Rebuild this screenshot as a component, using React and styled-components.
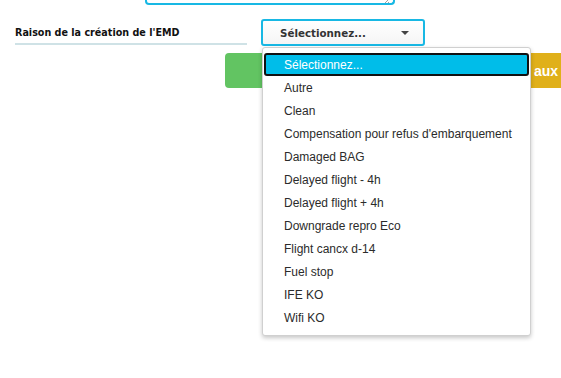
import React from "react";
import styled, { createGlobalStyle } from "styled-components";

const options = [
  "Autre",
  "Clean",
  "Compensation pour refus d'embarquement",
  "Damaged BAG",
  "Delayed flight - 4h",
  "Delayed flight + 4h",
  "Downgrade repro Eco",
  "Flight cancx d-14",
  "Fuel stop",
  "IFE KO",
  "Wifi KO",
];

const GlobalStyle = createGlobalStyle`
  html, body {
    margin: 0;
    padding: 0;
    background: #ffffff;
    overflow: hidden;
  }
  body {
    font-family: "Liberation Sans", Arial, sans-serif;
  }
`;

const Page = styled.div`
  width: 561px;
  height: 378px;
  position: relative;
  overflow: hidden;
`;

const TextareaEnd = styled.div`
  position: relative;
  margin-left: 145px;
  width: 250px;
  height: 5px;
  box-sizing: border-box;
  border: 2px solid #18b8e4;
  border-top: none;
  border-radius: 0 0 4px 4px;
`;

const Grip = styled.svg`
  position: absolute;
  right: 4px;
  bottom: 0;
`;

const FieldRow = styled.div`
  display: flex;
  align-items: flex-start;
  margin-top: 14px;
`;

const Label = styled.div`
  margin-left: 15px;
  width: 232px;
  height: 24px;
  border-bottom: 2px solid #cfe2e6;
  font-family: "DejaVu Sans", Verdana, sans-serif;
  font-weight: bold;
  font-size: 9.6px;
  color: #111;
  line-height: 28px;
`;

const SelectWrap = styled.div`
  position: relative;
  margin-left: 14px;
`;

const SelectBox = styled.div`
  width: 164px;
  height: 27px;
  box-sizing: border-box;
  border: 2px solid #18b8e4;
  border-radius: 3px;
  background: linear-gradient(#ffffff, #f5f5f5);
  display: flex;
  align-items: center;
  padding-left: 17px;
  padding-right: 14px;
  font-family: "DejaVu Sans", Tahoma, sans-serif;
  font-weight: bold;
  font-size: 10.3px;
  color: #333;
`;

const SelectText = styled.span`
  flex: 1;
`;

const Caret = styled.span`
  width: 0;
  height: 0;
  border-left: 4px solid transparent;
  border-right: 4px solid transparent;
  border-top: 4px solid #444;
`;

const Dropdown = styled.ul`
  position: absolute;
  top: 28px;
  left: 1px;
  width: 269px;
  height: 289px;
  box-sizing: border-box;
  margin: 0;
  padding: 5px 1px 0 1px;
  list-style: none;
  background: #fff;
  border: 1px solid #d0d0d0;
  border-radius: 3px;
  box-shadow: 0 2px 4px rgba(0, 0, 0, 0.22);
  z-index: 10;
`;

const Option = styled.li`
  height: 23px;
  box-sizing: border-box;
  display: flex;
  align-items: center;
  padding-left: ${(p) => (p.$active ? "18px" : "20px")};
  font-family: "Liberation Sans", Arial, sans-serif;
  font-size: 12px;
  color: ${(p) => (p.$active ? "#fff" : "#2b2b2b")};
  background: ${(p) => (p.$active ? "#00bde9" : "transparent")};
  border: ${(p) => (p.$active ? "2px solid #111" : "none")};
  border-radius: ${(p) => (p.$active ? "3px" : "0")};
`;

const ButtonRow = styled.div`
  display: flex;
  margin-top: 7px;
  padding-left: 225px;
  gap: 20px;
`;

const Button = styled.div`
  flex: ${(p) => (p.$fill ? "1" : "0 0 140px")};
  height: 35px;
  box-sizing: border-box;
  border-radius: ${(p) => (p.$fill ? "4px 0 0 4px" : "4px")};
  background: ${(p) => p.$bg};
  color: #fff;
  font-family: "Liberation Sans", Arial, sans-serif;
  font-weight: bold;
  font-size: 14px;
  display: flex;
  align-items: center;
  justify-content: flex-end;
  padding-right: 3px;
  white-space: nowrap;
`;

export default function App() {
  return (
    <Page>
      <GlobalStyle />
      <TextareaEnd>
        <Grip width="7" height="4" viewBox="0 0 7 4">
          <path d="M3 4 L7 0 M6 4 L7 3" stroke="#888" strokeWidth="0.8" />
        </Grip>
      </TextareaEnd>

      <FieldRow>
        <Label>Raison de la création de l'EMD</Label>
        <SelectWrap>
          <SelectBox>
            <SelectText>Sélectionnez...</SelectText>
            <Caret />
          </SelectBox>
          <Dropdown>
            <Option $active>Sélectionnez...</Option>
            {options.map((o) => (
              <Option key={o}>{o}</Option>
            ))}
          </Dropdown>
        </SelectWrap>
      </FieldRow>

      <ButtonRow>
        <Button $bg="#62c462" />
        <Button $bg="#e0b01a" $fill>aux</Button>
      </ButtonRow>
    </Page>
  );
}
